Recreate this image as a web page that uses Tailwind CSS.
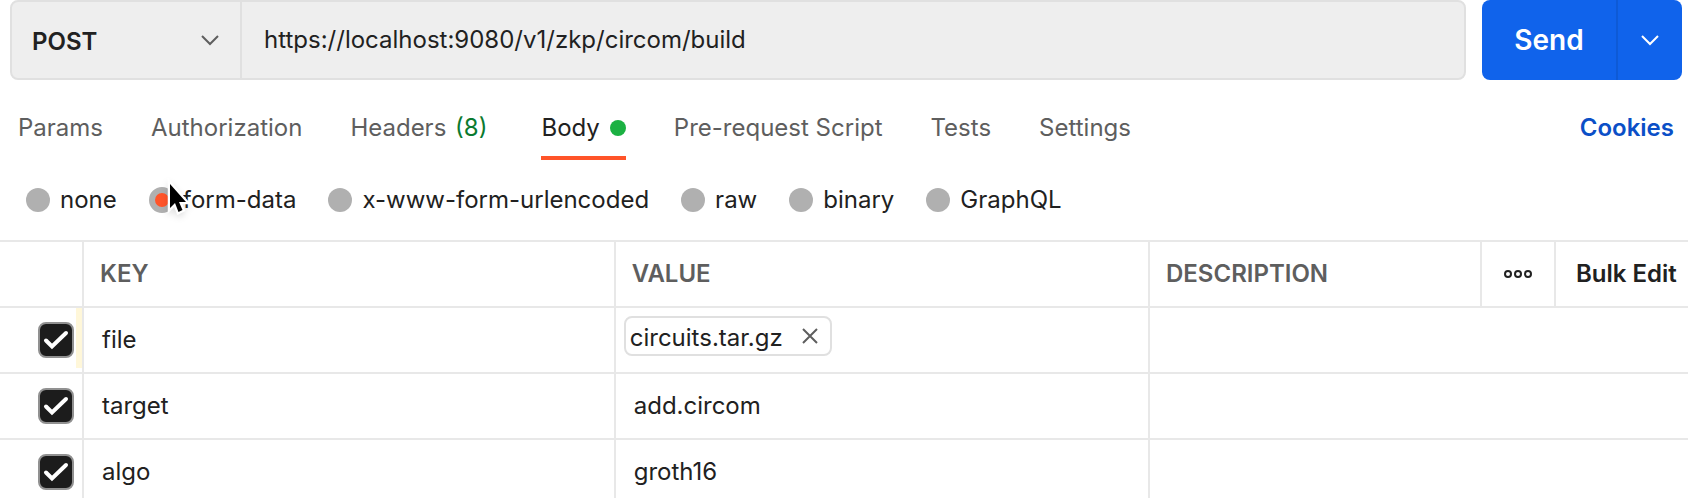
<!DOCTYPE html>
<html lang="en">
<head>
<meta charset="utf-8">
<title>Request builder</title>
<script src="https://cdn.jsdelivr.net/npm/@tailwindcss/browser@4"></script>
</head>
<body class="bg-white">
<main class="h-screen overflow-hidden font-['Inter','Liberation_Sans',sans-serif] text-2xl leading-8 text-[#212121]">
  <form class="flex h-20 gap-4 pl-2.5 pr-1.5">
    <div class="flex min-w-0 flex-1 overflow-hidden rounded-lg border-2 border-[#e0e0e0] bg-[#eeeeee]">
      <div class="relative w-[230px] shrink-0 border-r-2 border-[#e0e0e0]">
        <select aria-label="HTTP method" class="size-full appearance-none bg-transparent pl-5 pt-1 text-2xl font-semibold outline-none">
          <option>POST</option>
          <option>GET</option>
        </select>
        <svg class="pointer-events-none absolute right-5 top-8 h-3 w-5" viewBox="0 0 20 12" fill="none" stroke="#5e5e5e" stroke-width="2"><path d="M2 2l8 8 8-8"/></svg>
      </div>
      <input aria-label="Request URL" type="text" value="https://localhost:9080/v1/zkp/circom/build" class="min-w-0 flex-1 bg-transparent px-[22px] text-2xl outline-none">
    </div>
    <div class="flex w-[200px] shrink-0 overflow-hidden rounded-lg bg-[#1063eb] text-white">
      <button type="button" class="flex-1 text-[28px] font-semibold">Send</button>
      <button type="button" aria-label="Send options" class="flex w-[66px] items-center justify-center border-l-2 border-[#0e5ad6]">
        <svg class="h-3 w-5" viewBox="0 0 20 12" fill="none" stroke="currentColor" stroke-width="2"><path d="M2 2l8 8 8-8"/></svg>
      </button>
    </div>
  </form>

  <nav class="flex h-20 items-stretch gap-12 pl-[18px] pr-3.5 text-[#5e5e5e]">
    <button type="button" class="border-b-4 border-transparent pt-5">Params</button>
    <button type="button" class="border-b-4 border-transparent pt-5">Authorization</button>
    <button type="button" class="mr-1.5 border-b-4 border-transparent pt-5">Headers <span class="ml-0.5 text-[#0a7a2f]">(8)</span></button>
    <button type="button" class="flex items-center gap-2.5 border-b-4 border-[#ff5429] pt-5 text-[#212121]">Body <span class="size-4 rounded-full bg-[#1bb142]"></span></button>
    <button type="button" class="border-b-4 border-transparent pt-5">Pre-request Script</button>
    <button type="button" class="border-b-4 border-transparent pt-5">Tests</button>
    <button type="button" class="border-b-4 border-transparent pt-5">Settings</button>
    <a href="#" class="ml-auto flex items-center border-b-4 border-transparent pt-5 font-semibold text-[#0b4fc7]">Cookies</a>
  </nav>

  <fieldset class="flex h-20 items-center gap-8 pl-[26px]">
    <label class="flex items-center gap-2.5"><input type="radio" name="body" class="size-6 appearance-none rounded-full bg-[#b0b0b0]">none</label>
    <label class="relative flex items-center gap-2"><input type="radio" name="body" checked class="size-[26px] appearance-none rounded-full border-6 border-[#b0b0b0] bg-[#ff5429]">form-data
      <svg class="pointer-events-none absolute left-4 -top-2.5 h-12 w-8 overflow-visible drop-shadow-md" viewBox="0 0 32 48"><path d="M5 10v24l5-5 3.500 9 4-2-3.500-8h7z" fill="#000" stroke="#fff" stroke-width="4.500" paint-order="stroke"/></svg>
    </label>
    <label class="flex items-center gap-2.5"><input type="radio" name="body" class="size-6 appearance-none rounded-full bg-[#b0b0b0]">x-www-form-urlencoded</label>
    <label class="flex items-center gap-2.5"><input type="radio" name="body" class="size-6 appearance-none rounded-full bg-[#b0b0b0]">raw</label>
    <label class="flex items-center gap-2.5"><input type="radio" name="body" class="size-6 appearance-none rounded-full bg-[#b0b0b0]">binary</label>
    <label class="flex items-center gap-2.5"><input type="radio" name="body" class="size-6 appearance-none rounded-full bg-[#b0b0b0]">GraphQL</label>
  </fieldset>

  <table class="w-full table-fixed border-separate border-spacing-0 text-left">
    <colgroup>
      <col class="w-[82px]"><col class="w-[31.5%]"><col class="w-[31.65%]"><col><col class="w-[74px]"><col class="w-[134px]">
    </colgroup>
    <thead>
      <tr class="h-[66px] text-[#5e5e5e]">
        <th class="border-t-2 border-[#e8e8e8]"></th>
        <th class="border-l-2 border-t-2 border-[#e8e8e8] pl-4 font-semibold">KEY</th>
        <th class="border-l-2 border-t-2 border-[#e8e8e8] pl-4 font-semibold">VALUE</th>
        <th class="border-l-2 border-t-2 border-[#e8e8e8] pl-4 font-semibold">DESCRIPTION</th>
        <th class="border-l-2 border-t-2 border-[#e8e8e8]">
          <button type="button" aria-label="More options" class="flex w-full justify-center">
            <svg class="h-3 w-8" viewBox="0 0 32 12" fill="none" stroke="#212121" stroke-width="2"><circle cx="6" cy="6" r="3"/><circle cx="16" cy="6" r="3"/><circle cx="26" cy="6" r="3"/></svg>
          </button>
        </th>
        <th class="border-l-2 border-t-2 border-[#e8e8e8] pl-5"><button type="button" class="whitespace-nowrap font-semibold text-[#212121]">Bulk Edit</button></th>
      </tr>
    </thead>
    <tbody>
      <tr class="h-[66px]">
        <td class="relative border-t-2 border-[#e8e8e8] pl-[38px]">
          <span class="absolute right-0 top-0 h-15 w-1.5 bg-[#fff7d9]"></span>
          <label class="relative block size-9"><input type="checkbox" checked aria-label="Include file" class="block size-9 appearance-none rounded-lg border-2 border-[#919191] bg-[#1c1c1c]">
            <svg class="pointer-events-none absolute inset-0 size-9" viewBox="0 0 36 36" fill="none" stroke="#fff" stroke-width="4" stroke-linecap="round" stroke-linejoin="miter"><path d="M8 18.500l6 6 14-13.500"/></svg></label>
        </td>
        <td class="border-l-2 border-t-2 border-[#e8e8e8] pl-[18px]">file</td>
        <td class="border-l-2 border-t-2 border-[#e8e8e8] pb-2 pl-2">
          <div class="flex h-10 w-52 items-center justify-between rounded-lg border-2 border-[#e0e0e0] pl-1 pr-2.5"><span class="pt-1">circuits.tar.gz</span>
            <button type="button" aria-label="Remove file"><svg class="size-5" viewBox="0 0 20 20" fill="none" stroke="#5e5e5e" stroke-width="2"><path d="M3 3l14 14M17 3L3 17"/></svg></button>
          </div>
        </td>
        <td colspan="3" class="border-l-2 border-t-2 border-[#e8e8e8]"></td>
      </tr>
      <tr class="h-[66px]">
        <td class="border-t-2 border-[#e8e8e8] pl-[38px]">
          <label class="relative block size-9"><input type="checkbox" checked aria-label="Include target" class="block size-9 appearance-none rounded-lg border-2 border-[#919191] bg-[#1c1c1c]">
            <svg class="pointer-events-none absolute inset-0 size-9" viewBox="0 0 36 36" fill="none" stroke="#fff" stroke-width="4" stroke-linecap="round" stroke-linejoin="miter"><path d="M8 18.500l6 6 14-13.500"/></svg></label>
        </td>
        <td class="border-l-2 border-t-2 border-[#e8e8e8] pl-[18px]">target</td>
        <td class="border-l-2 border-t-2 border-[#e8e8e8] pl-[18px]">add.circom</td>
        <td colspan="3" class="border-l-2 border-t-2 border-[#e8e8e8]"></td>
      </tr>
      <tr class="h-[66px]">
        <td class="border-t-2 border-[#e8e8e8] pl-[38px]">
          <label class="relative block size-9"><input type="checkbox" checked aria-label="Include algo" class="block size-9 appearance-none rounded-lg border-2 border-[#919191] bg-[#1c1c1c]">
            <svg class="pointer-events-none absolute inset-0 size-9" viewBox="0 0 36 36" fill="none" stroke="#fff" stroke-width="4" stroke-linecap="round" stroke-linejoin="miter"><path d="M8 18.500l6 6 14-13.500"/></svg></label>
        </td>
        <td class="border-l-2 border-t-2 border-[#e8e8e8] pl-[18px]">algo</td>
        <td class="border-l-2 border-t-2 border-[#e8e8e8] pl-[18px]">groth16</td>
        <td colspan="3" class="border-l-2 border-t-2 border-[#e8e8e8]"></td>
      </tr>
    </tbody>
  </table>
</main>
</body>
</html>
